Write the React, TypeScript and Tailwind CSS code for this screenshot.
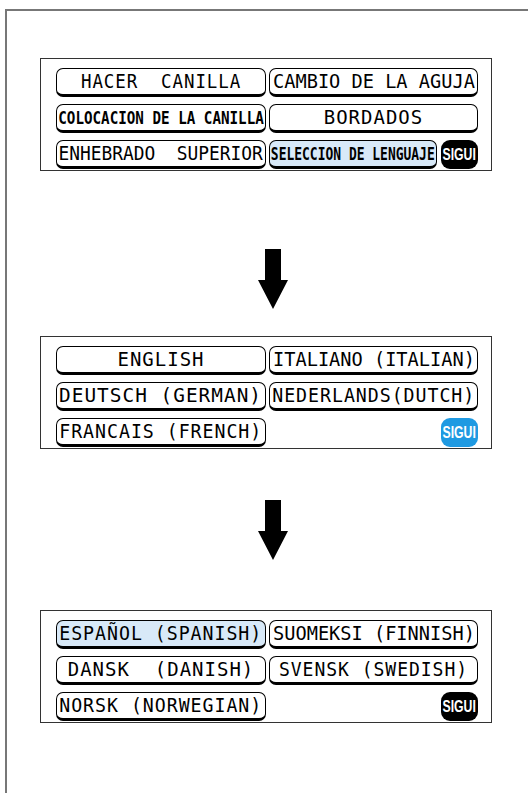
import type { ReactNode } from "react"

type Btn = {
  label: string
  fit?: string
  selected?: boolean
}

function Key({ label, fit = "", selected = false }: Btn) {
  return (
    <div
      className={`
        h-[29px] min-w-0 flex items-center justify-center overflow-visible
        border-[1.5px] border-b-[3px] border-black rounded-[7px]
        ${selected ? "bg-[#d8e9f8]" : "bg-white"}
      `}
    >
      <span className={`inline-block shrink-0 whitespace-pre text-black leading-none ${fit}`}>
        {label}
      </span>
    </div>
  )
}

function Sigui({ blue = false }: { blue?: boolean }) {
  return (
    <div
      className={`
        w-[37px] h-[29px] shrink-0 rounded-[9px] flex items-center justify-center
        ${blue ? "bg-[#1f9ae2]" : "bg-black"}
      `}
    >
      <span className="inline-block text-white font-bold text-[17px] leading-none scale-x-[0.72] font-['Liberation_Sans',sans-serif]">
        SIGUI
      </span>
    </div>
  )
}

function Panel({ children }: { children: ReactNode }) {
  return (
    <div className="ml-[33px] w-[452px] border border-[#333] bg-white pt-[9px] pb-px pl-[15px] pr-[13px]">
      <div className="grid grid-cols-[210px_209px] gap-x-[3px] gap-y-[7px]">
        {children}
      </div>
    </div>
  )
}

function Arrow() {
  return (
    <div className="ml-[250px] w-[32px]">
      <svg width="32" height="60" viewBox="0 0 32 60">
        <polygon points="8,0 24,0 24,31 31,31 16,60 1,31 8,31" fill="#000" />
      </svg>
    </div>
  )
}

// normal labels: 19px mono, condensed ones squeezed with scale-x
const normal = "text-[19px] tracking-[1px]"
const tight = "text-[19px] tracking-normal"
const narrow = "text-[18px] font-bold tracking-normal"

export default function App() {
  return (
    <div className="w-[528px] h-[793px] overflow-hidden bg-white font-['DejaVu_Sans_Mono','Liberation_Mono',monospace]">

      <div className="mt-[9px] ml-[5px] h-[790px] border-l-2 border-t-2 border-[#777]">

        <div className="pt-[47px]">
          <Panel>
            <Key label="HACER  CANILLA" fit={`${normal} scale-x-[0.92]`} />
            <Key label="CAMBIO DE LA AGUJA" fit={`${tight} scale-x-[0.98]`} />
            <Key label="COLOCACION DE LA CANILLA" fit={`${narrow} scale-x-[0.79]`} />
            <Key label="BORDADOS" fit={normal} />
            <Key label="ENHEBRADO  SUPERIOR" fit={`${tight} scale-x-[0.94]`} />
            <div className="flex min-w-0 gap-[4px]">
              <div className="flex-1 min-w-0">
                <Key label="SELECCION DE LENGUAJE" fit={`${narrow} scale-x-[0.72]`} selected />
              </div>
              <Sigui />
            </div>
          </Panel>
        </div>

        <div className="mt-[78px]">
          <Arrow />
        </div>

        <div className="mt-[27px]">
          <Panel>
            <Key label="ENGLISH" fit={normal} />
            <Key label="ITALIANO (ITALIAN)" fit={`${tight} scale-x-[0.98]`} />
            <Key label="DEUTSCH (GERMAN)" fit={`${normal} scale-x-[1.02]`} />
            <Key label="NEDERLANDS(DUTCH)" fit={`${normal} scale-x-[0.96]`} />
            <Key label="FRANCAIS (FRENCH)" fit={`${normal} scale-x-[0.96]`} />
            <div className="flex justify-end">
              <Sigui blue />
            </div>
          </Panel>
        </div>

        <div className="mt-[51px]">
          <Arrow />
        </div>

        <div className="mt-[50px]">
          <Panel>
            <Key label="ESPAÑOL (SPANISH)" fit={`${normal} scale-x-[0.96]`} selected />
            <Key label="SUOMEKSI (FINNISH)" fit={`${tight} scale-x-[0.98]`} />
            <Key label="DANSK  (DANISH)" fit={normal} />
            <Key label="SVENSK (SWEDISH)" fit={`${normal} scale-x-[0.95]`} />
            <Key label="NORSK (NORWEGIAN)" fit={`${normal} scale-x-[0.96]`} />
            <div className="flex justify-end">
              <Sigui />
            </div>
          </Panel>
        </div>

      </div>
    </div>
  )
}
